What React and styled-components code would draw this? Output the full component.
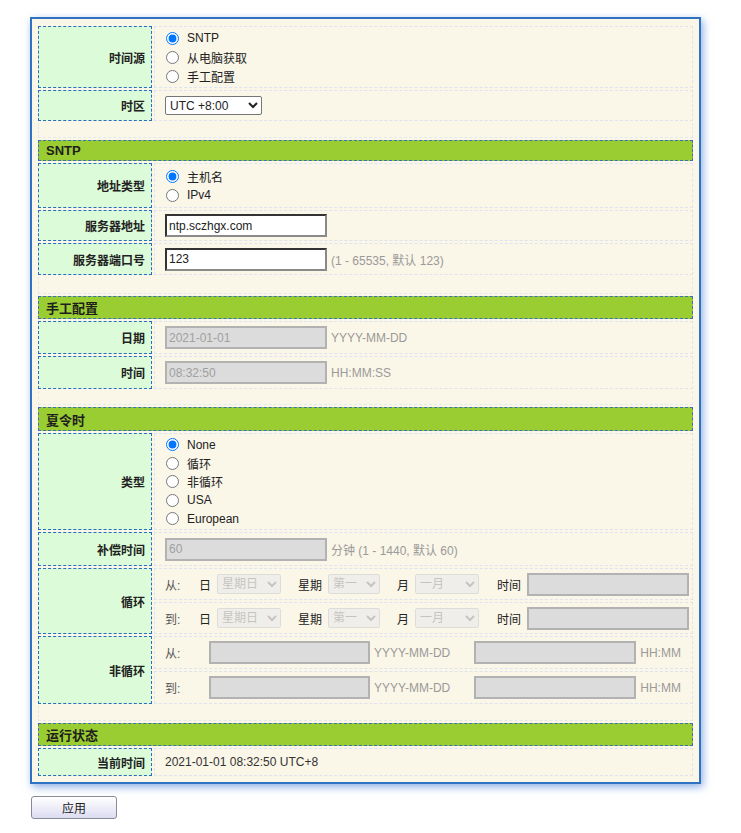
import React from "react";
import styled, { createGlobalStyle } from "styled-components";

const GlobalStyle = createGlobalStyle`
  body {
    margin: 0;
    background: #fff;
    font-family: "Liberation Sans", "Noto Sans CJK SC", sans-serif;
    font-size: 12px;
    color: #222;
  }
  * { box-sizing: border-box; }
`;

const Page = styled.div`
  padding: 17px 0 20px 30px;
`;

const Panel = styled.div`
  width: 671px;
  background: #faf6e8;
  border: 2px solid #2f72c2;
  padding: 7px 6px 6px;
  box-shadow: 2px 3px 8px rgba(50, 110, 210, 0.55);
`;

const Form = styled.div`
  display: grid;
  grid-template-columns: 114px minmax(0, 1fr);
  gap: 2px;
`;

const Label = styled.div`
  display: flex;
  align-items: center;
  justify-content: flex-end;
  padding: 0 6px;
  height: ${(p) => p.$h}px;
  background: #dcfcd9;
  border: 1px dashed #2a6cc0;
  font-weight: bold;
  color: #222;
`;

const Value = styled.div`
  display: flex;
  flex-direction: ${(p) => (p.$stack ? "column" : "row")};
  align-items: ${(p) => (p.$stack ? "stretch" : "center")};
  gap: ${(p) => (p.$stack ? "2px" : "0")};
  padding: ${(p) => (p.$stack ? "0" : "0 10px")};
  height: ${(p) => p.$h}px;
  min-width: 0;
  border: ${(p) => (p.$stack ? "none" : "1px dashed #dfe2f1")};
`;

const SubRow = styled.div`
  flex: 1;
  display: flex;
  align-items: center;
  padding: 0 2px 0 10px;
  border: 1px dashed #dfe2f1;
`;

const Spacer = styled.div`
  grid-column: 1 / -1;
  height: ${(p) => p.$h}px;
  border: 1px dashed #e6e6ee;
  border-top: none;
`;

const SectionHead = styled.div`
  grid-column: 1 / -1;
  display: flex;
  align-items: center;
  height: ${(p) => p.$h}px;
  padding-left: 7px;
  background: #9acd32;
  border: 1px dashed #3a70b8;
  font-weight: bold;
  font-size: 13px;
  color: #1e1e1e;
`;

const RadioList = styled.div`
  display: flex;
  flex-direction: column;
`;

const RadioItem = styled.label`
  display: flex;
  align-items: center;
  height: ${(p) => p.$lh || 19}px;
  color: #222;

  input {
    width: 13px;
    height: 13px;
    margin: 0 8px 0 1px;
  }
`;

const ZoneSelect = styled.select`
  width: 97px;
  height: 19px;
  font-family: "Liberation Sans", "Noto Sans CJK SC", sans-serif;
  font-size: 12px;
  color: #222;
  background: #fff;
  border: 1px solid #767676;
  border-radius: 2px;
`;

const TextInput = styled.input`
  width: ${(p) => p.$w || 162}px;
  height: 23px;
  flex-shrink: 0;
  border: 2px solid;
  border-color: #333 #8a8a8a #8a8a8a #333;
  padding: 0 2px;
  font-family: "Liberation Sans", "Noto Sans CJK SC", sans-serif;
  font-size: 12px;
  color: #222;
  background: #fff;
  outline: none;

  &:disabled {
    background: #dcdcdc;
    border-color: #b2b2b2;
    color: #a0a0a0;
  }
`;

const SmallSelect = styled.select`
  width: ${(p) => p.$w}px;
  height: 20px;
  flex-shrink: 0;
  font-family: "Liberation Sans", "Noto Sans CJK SC", sans-serif;
  font-size: 12px;
  background: #ececec;
  color: #b0b0b0;
  border: 1px solid #d2d2d2;
  border-radius: 2px;
`;

const Hint = styled.span`
  margin-left: 4px;
  color: #9a9a9a;
  white-space: nowrap;
`;

const Word = styled.span`
  flex-shrink: 0;
  color: ${(p) => (p.$muted ? "#555" : "#222")};
  width: ${(p) => (p.$w ? `${p.$w}px` : "auto")};
  white-space: nowrap;
`;

const Field = styled.span`
  display: inline-flex;
  align-items: center;
  gap: 6px;
  margin-left: ${(p) => p.$ml || 17}px;
`;

const Gap = styled.span`
  flex-shrink: 0;
  width: 24px;
`;

const Status = styled.span`
  color: #333;
`;

const ApplyButton = styled.button`
  display: block;
  margin: 12px 0 0 1px;
  width: 86px;
  height: 23px;
  border: 1px solid #8a8a98;
  border-radius: 3px;
  background: linear-gradient(#ffffff, #dcdcf2);
  font-family: "Liberation Sans", "Noto Sans CJK SC", sans-serif;
  font-size: 12px;
  color: #222;
`;

function Radios({ name, options, checked, lh }) {
  return (
    <RadioList>
      {options.map((o) => (
        <RadioItem key={o} $lh={lh}>
          <input type="radio" name={name} defaultChecked={o === checked} />
          {o}
        </RadioItem>
      ))}
    </RadioList>
  );
}

function RecurRow({ lead }) {
  return (
    <SubRow>
      <Word $muted $w={17}>{lead}</Word>
      <Field>
        <Word>日</Word>
        <SmallSelect $w={64} disabled>
          <option>星期日</option>
        </SmallSelect>
      </Field>
      <Field>
        <Word>星期</Word>
        <SmallSelect $w={52} disabled>
          <option>第一</option>
        </SmallSelect>
      </Field>
      <Field>
        <Word>月</Word>
        <SmallSelect $w={64} disabled>
          <option>一月</option>
        </SmallSelect>
      </Field>
      <Field $ml={18}>
        <Word>时间</Word>
        <TextInput $w={162} disabled />
      </Field>
    </SubRow>
  );
}

function OnceRow({ lead }) {
  return (
    <SubRow>
      <Word $muted $w={44}>{lead}</Word>
      <TextInput $w={161} disabled />
      <Hint>YYYY-MM-DD</Hint>
      <Gap />
      <TextInput $w={162} disabled />
      <Hint>HH:MM</Hint>
    </SubRow>
  );
}

export default function App() {
  return (
    <Page>
      <GlobalStyle />
      <Panel>
        <Form>
          <Label $h={62}>时间源</Label>
          <Value $h={62}>
            <Radios name="src" options={["SNTP", "从电脑获取", "手工配置"]} checked="SNTP" />
          </Value>

          <Label $h={31}>时区</Label>
          <Value $h={31}>
            <ZoneSelect defaultValue="UTC +8:00">
              <option>UTC +8:00</option>
            </ZoneSelect>
          </Value>

          <Spacer $h={15} />
          <SectionHead $h={21}>SNTP</SectionHead>

          <Label $h={45}>地址类型</Label>
          <Value $h={45}>
            <Radios name="addr" options={["主机名", "IPv4"]} checked="主机名" />
          </Value>

          <Label $h={31}>服务器地址</Label>
          <Value $h={31}>
            <TextInput defaultValue="ntp.sczhgx.com" />
          </Value>

          <Label $h={32}>服务器端口号</Label>
          <Value $h={32}>
            <TextInput defaultValue="123" />
            <Hint>(1 - 65535, 默认 123)</Hint>
          </Value>

          <Spacer $h={17} />
          <SectionHead $h={23}>手工配置</SectionHead>

          <Label $h={33}>日期</Label>
          <Value $h={33}>
            <TextInput disabled defaultValue="2021-01-01" />
            <Hint>YYYY-MM-DD</Hint>
          </Value>

          <Label $h={33}>时间</Label>
          <Value $h={33}>
            <TextInput disabled defaultValue="08:32:50" />
            <Hint>HH:MM:SS</Hint>
          </Value>

          <Spacer $h={14} />
          <SectionHead $h={24}>夏令时</SectionHead>

          <Label $h={97}>类型</Label>
          <Value $h={97}>
            <Radios
              name="dst"
              lh={18.5}
              options={["None", "循环", "非循环", "USA", "European"]}
              checked="None"
            />
          </Value>

          <Label $h={34}>补偿时间</Label>
          <Value $h={34}>
            <TextInput disabled defaultValue="60" />
            <Hint>分钟 (1 - 1440, 默认 60)</Hint>
          </Value>

          <Label $h={66}>循环</Label>
          <Value $h={66} $stack>
            <RecurRow lead="从:" />
            <RecurRow lead="到:" />
          </Value>

          <Label $h={68}>非循环</Label>
          <Value $h={68} $stack>
            <OnceRow lead="从:" />
            <OnceRow lead="到:" />
          </Value>

          <Spacer $h={15} />
          <SectionHead $h={23}>运行状态</SectionHead>

          <Label $h={28}>当前时间</Label>
          <Value $h={28}>
            <Status>2021-01-01 08:32:50 UTC+8</Status>
          </Value>
        </Form>
      </Panel>
      <ApplyButton>应用</ApplyButton>
    </Page>
  );
}
